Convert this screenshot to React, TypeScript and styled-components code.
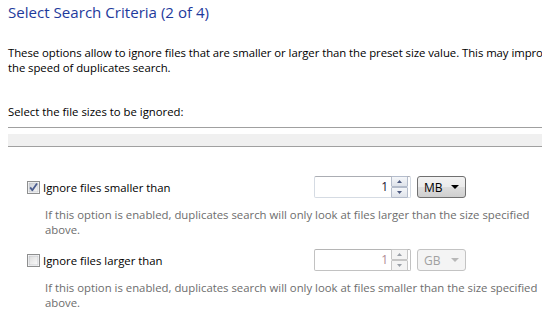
import React from "react";
import styled, { createGlobalStyle } from "styled-components";

const GlobalStyle = createGlobalStyle`
  html, body {
    margin: 0;
    padding: 0;
    background: #ffffff;
    overflow: hidden;
  }
  body {
    font-family: "Open Sans", "Noto Sans", "Liberation Sans", sans-serif;
    font-size: 11.35px;
    color: #000000;
  }
`;

interface OptionProps {
  label: string;
  checked: boolean;
  unit: string;
  description: string;
}

const CheckIcon = ({ checked }: { checked: boolean }) => (
  <svg width="13" height="13" viewBox="0 0 13 13">
    <defs>
      <linearGradient id={checked ? "cbOn" : "cbOff"} x1="0" y1="0" x2="1" y2="1">
        <stop offset="0" stopColor={checked ? "#cbcfd5" : "#dcdcdc"} />
        <stop offset="1" stopColor={checked ? "#f6f6f6" : "#fbfbfb"} />
      </linearGradient>
    </defs>
    <rect x="0.5" y="0.5" width="12" height="12" fill="#ffffff" stroke="#8e8f8f" />
    <rect x="2" y="2" width="9" height="9" fill={`url(#${checked ? "cbOn" : "cbOff"})`} stroke="#b8bcc2" strokeWidth="0.6" />
    {checked && (
      <path d="M3.2 6.4 L5.3 9.2 L10 2.6" fill="none" stroke="#4a5c8f" strokeWidth="1.8" strokeLinejoin="round" />
    )}
  </svg>
);

const Arrow = ({ up, color, w = 7 }: { up?: boolean; color: string; w?: number }) => {
  const h = Math.ceil(w / 2);
  return (
    <svg width={w} height={h} viewBox={`0 0 ${w} ${h}`}>
      <path
        d={up ? `M0 ${h} L${w / 2} 0 L${w} ${h} Z` : `M0 0 L${w / 2} ${h} L${w} 0 Z`}
        fill={color}
      />
    </svg>
  );
};

const Option = ({ label, checked, unit, description }: OptionProps) => {
  const disabled = !checked;
  const [first, rest] = description.split(" | ");
  return (
    <OptionBlock>
      <OptionRow>
        <CheckLabel>
          <CheckIcon checked={checked} />
          <span>{label}</span>
        </CheckLabel>
        <Controls>
          <SpinBox $disabled={disabled}>
            <SpinValue $disabled={disabled}>1</SpinValue>
            <SpinButtons>
              <SpinButton $disabled={disabled}>
                <Arrow up w={5} color={disabled ? "#9aa0a8" : "#4d5a80"} />
              </SpinButton>
              <SpinButton $disabled={disabled}>
                <Arrow w={5} color={disabled ? "#9aa0a8" : "#4d5a80"} />
              </SpinButton>
            </SpinButtons>
          </SpinBox>
          <Dropdown $disabled={disabled}>
            <span>{unit}</span>
            <Arrow w={8} color={disabled ? "#b8b8b8" : "#000000"} />
          </Dropdown>
        </Controls>
      </OptionRow>
      <Description>
        {first}
        <br />
        {rest}
      </Description>
    </OptionBlock>
  );
};

export default function App() {
  return (
    <Page>
      <GlobalStyle />
      <Title>Select Search Criteria (2 of 4)</Title>
      <Intro>
        These options allow to ignore files that are smaller or larger than the preset size value. This may improve
        <br />
        the speed of duplicates search.
      </Intro>
      <SectionLabel>Select the file sizes to be ignored:</SectionLabel>
      <Divider />
      <Band />
      <Options>
        <Option
          label="Ignore files smaller than"
          checked
          unit="MB"
          description="If this option is enabled, duplicates search will only look at files larger than the size specified | above."
        />
        <Option
          label="Ignore files larger than"
          checked={false}
          unit="GB"
          description="If this option is enabled, duplicates search will only look at files smaller than the size specified | above."
        />
      </Options>
    </Page>
  );
}

const Page = styled.main`
  width: 542px;
  height: 318px;
  box-sizing: border-box;
  padding: 1px 0 0 8px;
  overflow: hidden;
`;

const Title = styled.h1`
  margin: 0;
  font-size: 15.1px;
  font-weight: 400;
  line-height: 22px;
  color: #1e3a9c;
  white-space: nowrap;
`;

const Intro = styled.p`
  margin: 22px 0 0;
  line-height: 15px;
  white-space: nowrap;
  letter-spacing: -0.05px;
`;

const SectionLabel = styled.p`
  margin: 29px 0 0;
  line-height: 15px;
  white-space: nowrap;
`;

const Divider = styled.div`
  margin-top: 8px;
  height: 1px;
  background: #a0a0a0;
`;

const Band = styled.div`
  margin-top: 6px;
  height: 12px;
  background: #f0f0f0;
  border-bottom: 1px solid #a0a0a0;
`;

const Options = styled.section`
  display: flex;
  flex-direction: column;
  gap: 12px;
  padding: 29px 0 0 19px;
`;

const OptionBlock = styled.div`
  display: flex;
  flex-direction: column;
`;

const OptionRow = styled.div`
  display: grid;
  grid-template-columns: 287px auto;
  align-items: center;
  height: 22px;
`;

const CheckLabel = styled.label`
  display: flex;
  align-items: center;
  gap: 3px;
  white-space: nowrap;
`;

const Controls = styled.div`
  display: flex;
  align-items: center;
  gap: 6px;
`;

const SpinBox = styled.div<{ $disabled: boolean }>`
  display: flex;
  align-items: center;
  justify-content: flex-end;
  width: 97px;
  height: 22px;
  box-sizing: border-box;
  padding: 1px 2px 1px 4px;
  gap: 3px;
  border: 1px solid ${(p) => (p.$disabled ? "#c2c2c2" : "#d5dbe3")};
  border-top-color: ${(p) => (p.$disabled ? "#b5b5b5" : "#abadb3")};
  border-radius: 2px;
  background: #ffffff;
`;

const SpinValue = styled.span<{ $disabled: boolean }>`
  font-size: 12px;
  color: ${(p) => (p.$disabled ? "#b08c94" : "#1a1030")};
  line-height: 18px;
`;

const SpinButtons = styled.div`
  display: flex;
  flex-direction: column;
`;

const SpinButton = styled.div<{ $disabled: boolean }>`
  display: flex;
  align-items: center;
  justify-content: center;
  width: 15px;
  height: 9px;
  border: 1px solid ${(p) => (p.$disabled ? "#c6c6c6" : "#b4bccb")};
  border-radius: 1px;
  background: ${(p) =>
    p.$disabled ? "#f4f4f4" : "linear-gradient(#f5f7fa, #dfe3ea)"};
`;

const Dropdown = styled.div<{ $disabled: boolean }>`
  display: flex;
  align-items: center;
  justify-content: space-between;
  width: 49px;
  height: 22px;
  box-sizing: border-box;
  padding: 0 6px 0 6px;
  font-size: 12px;
  border: 1px solid ${(p) => (p.$disabled ? "#c3c3c3" : "#707070")};
  border-radius: 3px;
  background: ${(p) =>
    p.$disabled ? "#f4f4f4" : "linear-gradient(#f2f2f2 0%, #ebebeb 50%, #dddddd 51%, #cfcfcf 100%)"};
  color: ${(p) => (p.$disabled ? "#a0a0a0" : "#000000")};
`;

const Description = styled.p`
  margin: 9px 0 0 18px;
  line-height: 15px;
  color: #6d6d6d;
  white-space: nowrap;
`;
